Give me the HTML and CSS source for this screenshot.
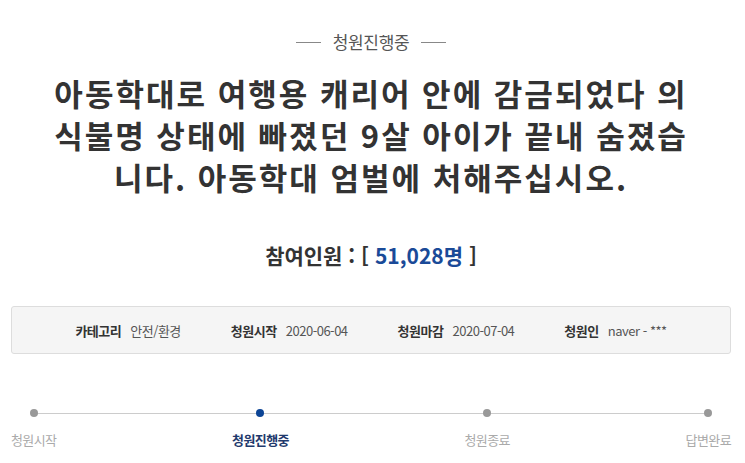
FILE: index.html
```html
<!DOCTYPE html>
<html lang="ko">
<head>
  <meta charset="UTF-8">
  <title>청원진행중</title>
  <link rel="stylesheet" href="styles.css">
</head>
<body>
  <div class="petition">
    <p class="status"><span>청원진행중</span></p>

    <h1 class="title">아동학대로 여행용 캐리어 안에 감금되었다 의식불명 상태에 빠졌던 9살 아이가 끝내 숨졌습니다. 아동학대 엄벌에 처해주십시오.</h1>

    <p class="count">참여인원 : [ <span>51,028명</span> ]</p>

    <ul class="meta">
      <li><strong>카테고리</strong> 안전/환경</li>
      <li><strong>청원시작</strong> 2020-06-04</li>
      <li><strong>청원마감</strong> 2020-07-04</li>
      <li><strong>청원인</strong> naver - ***</li>
    </ul>

    <ol class="steps">
      <li>청원시작</li>
      <li class="on">청원진행중</li>
      <li>청원종료</li>
      <li>답변완료</li>
    </ol>
  </div>
</body>
</html>
```

FILE: styles.css
```css
body {
  margin: 0;
  background: #fff;
  font-family: "Noto Sans CJK KR", "Noto Sans", sans-serif;
  color: #333;
}

.petition {
  width: 720px;
  margin-left: 11px;
}

.status {
  margin: 32px 0 0;
  display: flex;
  justify-content: center;
  align-items: center;
  gap: 12px;
  font-size: 17px;
  line-height: 20px;
  letter-spacing: -0.3px;
  color: #555;
}

.status::before,
.status::after {
  content: "";
  width: 25px;
  height: 1px;
  background: #888;
}

.title {
  width: 640px;
  margin: 20px auto 0;
  font-size: 31px;
  line-height: 42px;
  letter-spacing: 2px;
  font-weight: bold;
  text-align: center;
  color: #333;
}

.count {
  margin: 43px 0 0;
  text-align: center;
  font-size: 21px;
  line-height: 28px;
  font-weight: bold;
  color: #333;
}

.count span {
  color: #1a4a98;
}

.meta {
  list-style: none;
  margin: 37px 0 0;
  padding: 0;
  height: 46px;
  display: flex;
  justify-content: center;
  align-items: center;
  gap: 50px;
  background: #f5f5f5;
  border: 1px solid #ddd;
  border-radius: 3px;
  font-size: 13px;
  letter-spacing: -0.5px;
  color: #555;
}

.meta strong {
  color: #333;
  margin-right: 6px;
}

.steps {
  list-style: none;
  position: relative;
  margin: 55px 0 0;
  padding: 0;
  display: flex;
  justify-content: space-between;
  font-size: 13px;
  letter-spacing: -0.6px;
  color: #aaa;
}

.steps::before {
  content: "";
  position: absolute;
  left: 23px;
  right: 24px;
  top: 4px;
  height: 1px;
  background: #ccc;
}

.steps li {
  display: flex;
  flex-direction: column;
  align-items: center;
  gap: 14px;
  line-height: 18px;
}

.steps li::before {
  content: "";
  position: relative;
  width: 8px;
  height: 8px;
  border-radius: 50%;
  background: #999;
}

.steps li.on {
  color: #1f3a6d;
  font-weight: bold;
}

.steps li.on::before {
  background: #0d4596;
}
```
